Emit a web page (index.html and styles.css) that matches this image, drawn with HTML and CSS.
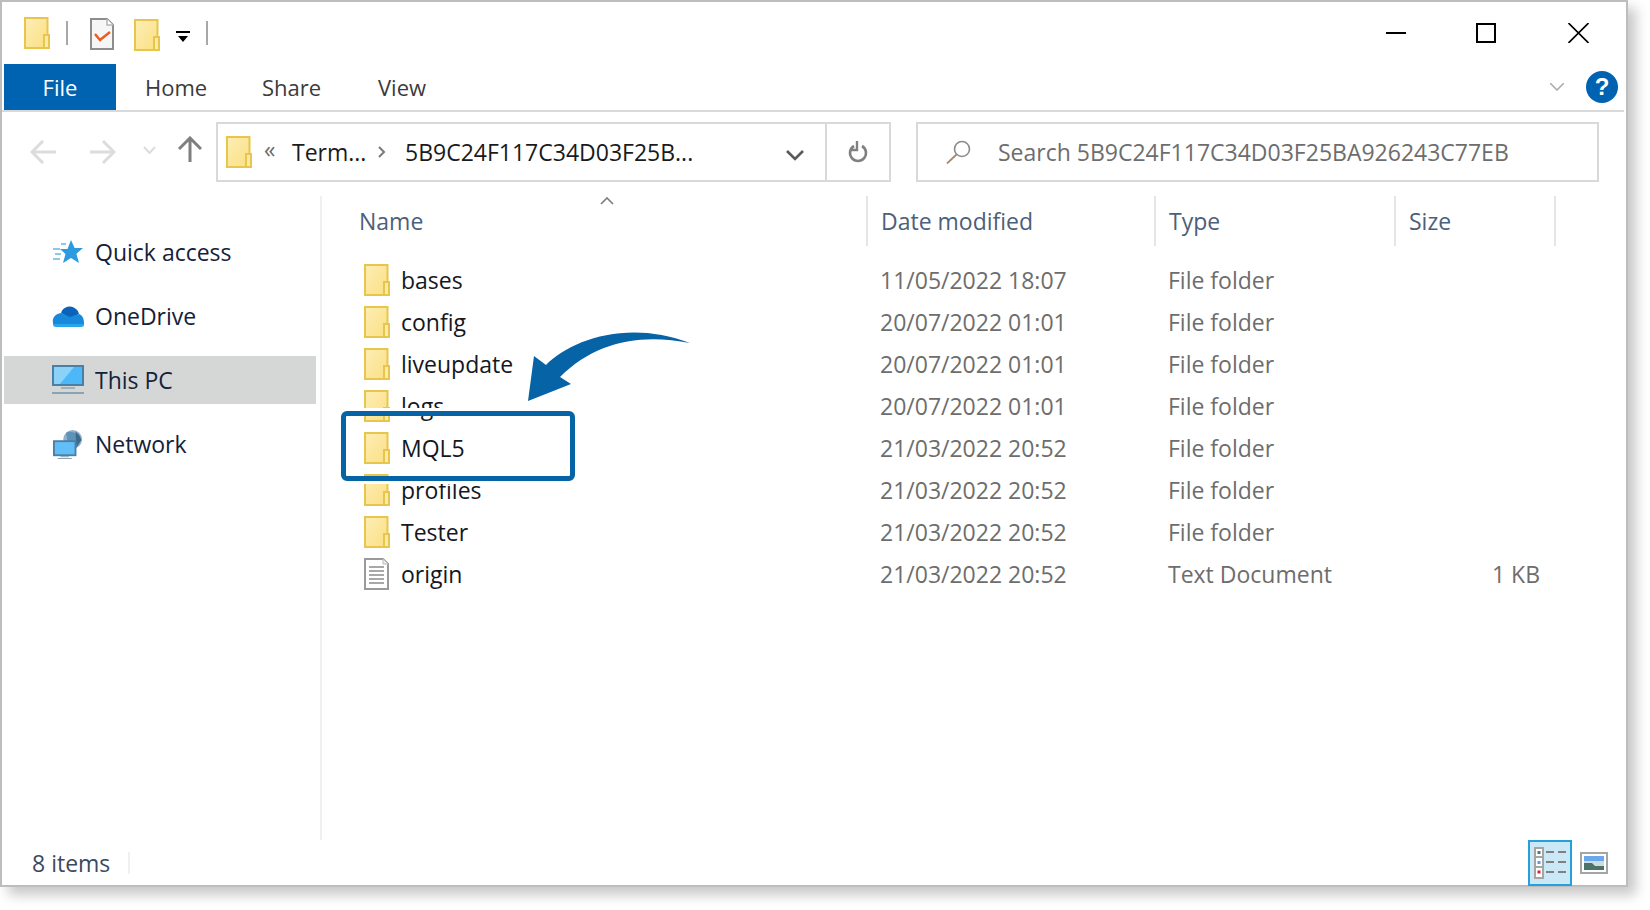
FILE: index.html
```html
<!DOCTYPE html>
<html lang="en">
<head>
<meta charset="utf-8">
<title>File Explorer</title>
<link rel="stylesheet" href="styles.css">
</head>
<body>
<svg class="sprite" width="0" height="0" aria-hidden="true">
  <defs>
    <linearGradient id="fg" x1="0" y1="0" x2="1" y2="1">
      <stop offset="0" stop-color="#fdeeb6"/>
      <stop offset="1" stop-color="#fbdf82"/>
    </linearGradient>
    <symbol id="folder" viewBox="0 0 26 32">
      <rect x="1" y="1" width="22.5" height="30" fill="url(#fg)" stroke="#e8c54c" stroke-width="2"/>
      <rect x="20" y="18" width="5" height="13" fill="#fdeaa6" stroke="#e8c54c" stroke-width="2"/>
    </symbol>
  </defs>
</svg>
<div class="window">
  <div class="qat">
    <svg class="ic-folder"><use href="#folder"/></svg>
    <span class="qat-sep"></span>
    <svg class="qat-task" viewBox="0 0 24 32">
      <path d="M1 1h16l6 6v24H1z" fill="#f6f6f6" stroke="#8d8d8d" stroke-width="2"/>
      <path d="M17 1v6h6" fill="#fff" stroke="#b5b5b5" stroke-width="1.5"/>
      <path d="M5 16l5 6 10-8" fill="none" stroke="#ee5a1f" stroke-width="2.4"/>
    </svg>
    <svg class="ic-folder qat-folder2"><use href="#folder"/></svg>
    <svg class="qat-drop" viewBox="0 0 14 12">
      <path d="M0 1h14v2H0zM2 6h10l-5 6z" fill="#000"/>
    </svg>
    <span class="qat-sep qat-sep2"></span>
    <div class="winbtns">
      <svg class="win-min" viewBox="0 0 20 20"><path d="M0 10h20" stroke="#000" stroke-width="2"/></svg>
      <svg class="win-max" viewBox="0 0 20 20"><rect x="1" y="1" width="18" height="18" fill="none" stroke="#000" stroke-width="2"/></svg>
      <svg class="win-close" viewBox="0 0 20 20"><path d="M0 0l20 20M20 0L0 20" stroke="#000" stroke-width="1.6"/></svg>
    </div>
  </div>
  <div class="tabs">
    <div class="tab tab-file">File</div>
    <div class="tab tab-home">Home</div>
    <div class="tab tab-share">Share</div>
    <div class="tab">View</div>
    <svg class="ribbon-chev" viewBox="0 0 14 8"><path d="M0 0l7 7 7-7" fill="none" stroke="#a8a8a8" stroke-width="1.5"/></svg>
    <div class="help">?</div>
  </div>
  <div class="toolbar">
    <div class="navbtns">
      <svg class="nb-back" viewBox="0 0 26 24"><path d="M26 12H3M13 1L2 12l11 11" fill="none" stroke="#dcdcdc" stroke-width="3"/></svg>
      <svg class="nb-fwd" viewBox="0 0 26 24"><path d="M0 12h23M13 1l11 11-11 11" fill="none" stroke="#dcdcdc" stroke-width="3"/></svg>
      <svg class="nb-drop" viewBox="0 0 13 8"><path d="M1 1l5.5 6L12 1" fill="none" stroke="#dcdcdc" stroke-width="2"/></svg>
      <svg class="nb-up" viewBox="0 0 24 26"><path d="M12 26V3M1 13L12 2l11 11" fill="none" stroke="#7f7f7f" stroke-width="3"/></svg>
    </div>
    <div class="address">
      <svg class="ic-folder"><use href="#folder"/></svg>
      <span class="crumb-more">«</span>
      <span class="crumb crumb-term">Term...</span>
      <svg class="crumb-sep" viewBox="0 0 8 12"><path d="M1 1l5 5-5 5" fill="none" stroke="#7a7a7a" stroke-width="2"/></svg>
      <span class="crumb">5B9C24F117C34D03F25B...</span>
      <div class="addr-drop">
        <svg class="addr-chev" viewBox="0 0 18 11"><path d="M1 1l8 8 8-8" fill="none" stroke="#5a5a5a" stroke-width="2.6"/></svg>
      </div>
      <div class="addr-refresh">
        <svg class="refresh" viewBox="0 0 20 24"><path d="M6 6a8 8 0 1 0 8 0" fill="none" stroke="#808080" stroke-width="2.6"/><path d="M9 1v9H3" fill="none" stroke="#808080" stroke-width="2.4"/></svg>
      </div>
    </div>
    <div class="search">
      <svg class="search-ic" viewBox="0 0 26 24"><circle cx="16" cy="9" r="7.5" fill="none" stroke="#8a8a8a" stroke-width="1.6"/><path d="M10.5 14.5L1 23.5" stroke="#a88a70" stroke-width="1.8"/></svg>
      <span class="search-text">Search 5B9C24F117C34D03F25BA926243C77EB</span>
    </div>
  </div>
  <div class="main">
    <nav class="nav">
      <div class="nav-row">
        <svg class="nav-ic" viewBox="0 0 32 26"><path d="M19 1l3.6 8H31l-6.600 5.800L27 24l-8-5-8 5 2.500-9L8 10h7.500z" fill="#2b9ae0"/><path d="M1 10h7M3 15h6M1 20h7M9 5h5" stroke="#8cc8ee" stroke-width="2"/></svg>
        <span>Quick access</span>
      </div>
      <div class="nav-row">
        <svg class="nav-ic" viewBox="0 0 32 22"><path d="M9 8a9 9 0 0 1 15-4 7 7 0 0 1 3 5l-9 4z" fill="#0a62ba"/><path d="M1 18c-1-5 2-9 8-10l9 4 9-3c3 1 5 4 5 9 0 2-1 3-3 3H4c-2 0-3-1-3-3z" fill="#1689db"/><path d="M1 19h31v1c0 1-1 2-3 2H4c-2 0-3-1-3-3z" fill="#2aa4ec"/></svg>
        <span>OneDrive</span>
      </div>
      <div class="nav-row nav-sel">
        <svg class="nav-ic" viewBox="0 0 32 30"><rect x="1" y="1" width="30" height="19" fill="#4cb8f8" stroke="#4a7fa6" stroke-width="2"/><path d="M2 2h20L8 19H2z" fill="#8ad2f7"/><path d="M9 22h14v2H9z" fill="#9db2bf"/><path d="M0 27h32v2H0z" fill="#8ba3b2"/></svg>
        <span>This PC</span>
      </div>
      <div class="nav-row">
        <svg class="nav-ic" viewBox="0 0 32 32"><circle cx="21" cy="11" r="10" fill="#8eb2cc"/><path d="M14 4c6-3 12 0 14 7l-6 9-6-4z" fill="#5e92b8"/><path d="M24 3c3 2 6 6 6 9l-5 8z" fill="#3a6a8c"/><rect x="1" y="13" width="23" height="15" fill="#62bef7" stroke="#4a7fa6" stroke-width="2"/><path d="M8 29h9v1H8zM5 31h15v1H5z" fill="#8ba3b2"/></svg>
        <span>Network</span>
      </div>
    </nav>
    <div class="list">
      <div class="head">
        <span class="caret"><svg class="caret-ic" viewBox="0 0 14 8"><path d="M1 7l6-6 6 6" fill="none" stroke="#7a7a7a" stroke-width="1.6"/></svg></span>
        <div class="col col-name">Name</div>
        <div class="col col-date">Date modified</div>
        <div class="col col-type">Type</div>
        <div class="col col-size">Size</div>
      </div>
      <div class="rows">
        <div class="row"><svg class="ic-folder"><use href="#folder"/></svg><span class="r-name">bases</span><span class="r-date">11/05/2022 18:07</span><span class="r-type">File folder</span><span class="r-size"></span></div>
        <div class="row"><svg class="ic-folder"><use href="#folder"/></svg><span class="r-name">config</span><span class="r-date">20/07/2022 01:01</span><span class="r-type">File folder</span><span class="r-size"></span></div>
        <div class="row"><svg class="ic-folder"><use href="#folder"/></svg><span class="r-name">liveupdate</span><span class="r-date">20/07/2022 01:01</span><span class="r-type">File folder</span><span class="r-size"></span></div>
        <div class="row"><svg class="ic-folder"><use href="#folder"/></svg><span class="r-name">logs</span><span class="r-date">20/07/2022 01:01</span><span class="r-type">File folder</span><span class="r-size"></span></div>
        <div class="row"><svg class="ic-folder"><use href="#folder"/></svg><span class="r-name">MQL5</span><span class="r-date">21/03/2022 20:52</span><span class="r-type">File folder</span><span class="r-size"></span></div>
        <div class="row"><svg class="ic-folder"><use href="#folder"/></svg><span class="r-name">profiles</span><span class="r-date">21/03/2022 20:52</span><span class="r-type">File folder</span><span class="r-size"></span></div>
        <div class="row"><svg class="ic-folder"><use href="#folder"/></svg><span class="r-name">Tester</span><span class="r-date">21/03/2022 20:52</span><span class="r-type">File folder</span><span class="r-size"></span></div>
        <div class="row"><svg class="ic-folder" viewBox="0 0 26 32"><path d="M1 1h18l5 5v25H1z" fill="#fff" stroke="#9a9a9a" stroke-width="2"/><path d="M19 1v5h5" fill="#eee" stroke="#bbb"/><path d="M5 9h15M5 13h15M5 17h15M5 21h15M5 25h15" stroke="#a8a8a8" stroke-width="2"/></svg><span class="r-name">origin</span><span class="r-date">21/03/2022 20:52</span><span class="r-type">Text Document</span><span class="r-size">1 KB</span></div>
      </div>
    </div>
  </div>
  <div class="status">
    <span class="status-count">8 items</span>
    <span class="status-sep"></span>
    <div class="views">
      <div class="view-details">
        <svg class="vd-ic" viewBox="0 0 32 32">
          <rect x="1" y="1" width="8" height="30" fill="#fff" stroke="#a5a5a5" stroke-width="2"/>
          <path d="M2 10h6M2 20h6" stroke="#a5a5a5" stroke-width="2"/>
          <rect x="3.500" y="4" width="3" height="3" fill="#4f7f6c"/><rect x="3.500" y="14" width="3" height="3" fill="#5b9bf0"/><rect x="3.500" y="23.500" width="3" height="3" fill="#d42a2a"/>
          <path d="M12 5h8M24 5h8M12 15h8M24 15h8M12 25h8M24 25h8" stroke="#808080" stroke-width="2"/>
        </svg>
      </div>
      <svg class="view-thumb" viewBox="0 0 28 22">
        <rect x="1" y="1" width="26" height="20" fill="#fff" stroke="#a5a5a5" stroke-width="2"/>
        <rect x="4" y="4" width="20" height="5" fill="#6aa8ee"/>
        <rect x="4" y="9" width="20" height="9" fill="#c9dde2"/>
        <path d="M4 11h8l3 3h9v4H4z" fill="#4d7268"/>
      </svg>
    </div>
  </div>
  <div class="callout"></div>
  <svg class="arrow" viewBox="0 0 180 85"><path d="M8 76L14 31 26 40C50 15 108 -6 170 18 120 8 75 17 40 52L51 59z" fill="#0563a6"/></svg>
</div>
</body>
</html>
```
FILE: styles.css
```css
* { box-sizing: border-box; }
html, body { margin: 0; padding: 0; background: #fff; }
body {
  width: 1650px;
  height: 910px;
  overflow: hidden;
  font-family: "Open Sans", "Liberation Sans", sans-serif;
  font-size: 23px;
  color: #1a1a1a;
}
svg { display: block; flex: none; }
.sprite { position: absolute; }

.window {
  position: relative;
  width: 1628px;
  height: 887px;
  border: 2px solid #bdbdbd;
  background: #fff;
  box-shadow: 8px 8px 12px rgba(0, 0, 0, 0.22);
  display: flex;
  flex-direction: column;
}

.ic-folder { width: 26px; height: 32px; }

/* Title bar / quick access */
.qat {
  height: 62px;
  display: flex;
  align-items: center;
  padding-left: 22px;
}
.qat-sep { width: 2px; height: 24px; background: #a8a8a8; margin-left: 16px; }
.qat-task { width: 24px; height: 32px; margin-left: 22px; margin-top: 2px; }
.qat-folder2 { margin-left: 20px; margin-top: 4px; }
.qat-drop { width: 14px; height: 12px; margin-left: 16px; margin-top: 6px; }
.qat-sep2 { margin-left: 16px; }
.winbtns { margin-left: auto; display: flex; align-items: center; margin-right: 37px; }
.win-min { width: 20px; height: 20px; }
.win-max { width: 20px; height: 20px; margin-left: 70px; }
.win-close { width: 21px; height: 20px; margin-left: 72px; }

/* Ribbon tabs */
.tabs {
  height: 48px;
  display: flex;
  align-items: center;
  border-bottom: 2px solid #d9d9d9;
  margin-right: 2px;
  color: #3b3b3b;
}
.tab { padding-left: 29px; width: 116px; font-size: 22px; }
.tab-file {
  width: 112px;
  height: 46px;
  margin-left: 2px;
  padding: 0;
  background: #0063b1;
  color: #fff;
  display: flex;
  align-items: center;
  justify-content: center;
}
.tab-home { width: 117px; }
.ribbon-chev { width: 14px; height: 8px; margin-left: auto; }
.help {
  width: 32px;
  height: 32px;
  margin-left: 22px;
  margin-right: 6px;
  border-radius: 50%;
  background: #0063b1;
  color: #fff;
  font-family: "Liberation Sans", sans-serif;
  font-weight: 700;
  font-size: 24px;
  line-height: 32px;
  text-align: center;
}

/* Toolbar */
.toolbar {
  height: 84px;
  display: flex;
  padding: 10px 0 14px 2px;
}
.navbtns { width: 212px; display: flex; align-items: center; }
.nb-back { width: 26px; height: 24px; margin-left: 26px; }
.nb-fwd { width: 26px; height: 24px; margin-left: 34px; }
.nb-drop { width: 13px; height: 8px; margin-left: 27px; margin-top: -4px; }
.nb-up { width: 24px; height: 26px; margin-left: 22px; margin-top: -6px; }
.address {
  width: 675px;
  height: 60px;
  border: 2px solid #d9d9d9;
  display: flex;
  align-items: center;
  padding-left: 8px;
  color: #1a1a1a;
}
.crumb-more { width: 28px; margin-left: 12px; color: #6a6a6a; line-height: 1; margin-top: -6px; }
.crumb-term { width: 86px; }
.crumb-sep { width: 8px; height: 12px; }
.address .crumb:last-of-type { margin-left: 19px; }
.addr-drop { margin-left: auto; width: 64px; display: flex; justify-content: center; padding-left: 4px; }
.addr-chev { width: 18px; height: 11px; margin-top: 6px; }
.addr-refresh {
  width: 64px;
  height: 100%;
  border-left: 2px solid #d9d9d9;
  display: flex;
  align-items: center;
  justify-content: center;
}
.refresh { width: 20px; height: 24px; }
.search {
  width: 683px;
  height: 60px;
  margin-left: 25px;
  border: 2px solid #d9d9d9;
  display: flex;
  align-items: center;
  padding-left: 28px;
  color: #6d6d6d;
}
.search-ic { width: 26px; height: 24px; }
.search-text { margin-left: 26px; }

/* Main area */
.main { flex: 1; display: flex; min-height: 0; }
.nav {
  width: 320px;
  border-right: 2px solid #f0f0f0;
  padding: 32px 0 0 2px;
  margin-bottom: 0;
  display: flex;
  flex-direction: column;
  gap: 16px;
}
.nav-row {
  width: 312px;
  height: 48px;
  display: flex;
  align-items: center;
  gap: 11px;
  padding-left: 48px;
  color: #14213a;
}
.nav-ic { width: 32px; height: 30px; }
.nav-sel { background: #d5d7d7; }

.list { flex: 1; min-width: 0; }
.head {
  position: relative;
  height: 50px;
  display: flex;
  color: #4c607a;
}
.caret { position: absolute; left: 278px; top: 1px; }
.caret-ic { width: 14px; height: 8px; }
.col { display: flex; align-items: center; padding-left: 13px; border-right: 2px solid #e5e5e5; }
.col-name { width: 546px; padding-left: 37px; }
.col-date { width: 288px; }
.col-type { width: 240px; }
.col-size { width: 160px; }

.rows { padding-top: 13px; }
.row { height: 42px; display: flex; align-items: center; padding-left: 42px; }
.r-name { width: 479px; margin-left: 11px; color: #14171f; }
.r-date { width: 288px; color: #6d6d6d; }
.r-type { width: 240px; color: #6d6d6d; }
.r-size { width: 132px; text-align: right; color: #6d6d6d; }

/* Status bar */
.status { height: 45px; display: flex; align-items: center; padding-left: 30px; color: #3c4a5e; }
.status-count { width: 96px; }
.status-sep { width: 2px; height: 22px; background: #f0f0f0; }
.views { margin-left: auto; display: flex; align-items: center; margin-right: 18px; gap: 8px; }
.view-details {
  width: 44px;
  height: 46px;
  background: #cbe8f6;
  border: 2px solid #26a0da;
  display: flex;
  align-items: center;
  justify-content: center;
}
.vd-ic { width: 32px; height: 32px; }
.view-thumb { width: 28px; height: 22px; }

/* Annotation over the list */
.callout {
  position: absolute;
  left: 339px;
  top: 409px;
  width: 234px;
  height: 70px;
  border: 5px solid #0563a6;
  border-radius: 6px;
  box-shadow: 0 0 0 3px #fff;
}
.arrow { position: absolute; left: 518px; top: 323px; width: 180px; height: 85px; }
```
